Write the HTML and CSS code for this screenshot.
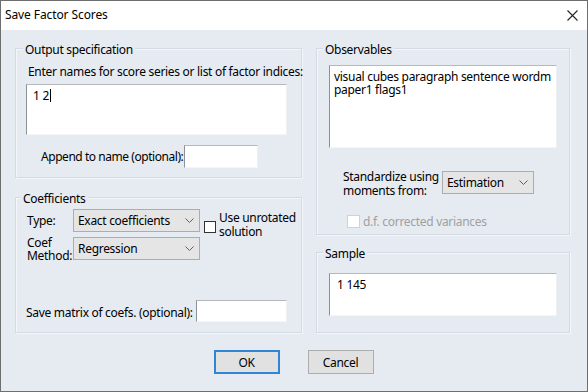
FILE: index.html
```html
<!DOCTYPE html>
<html>
<head>
<meta charset="utf-8">
<title>Save Factor Scores</title>
<link rel="stylesheet" href="styles.css">
</head>
<body>
<div class="window">
  <div class="titlebar">
    <span class="title">Save Factor Scores</span>
    <svg class="close" width="11" height="11" viewBox="0 0 11 11"><path d="M0.5 0.5 L10.5 10.5 M10.5 0.5 L0.5 10.5" stroke="#222" stroke-width="1.1" fill="none"/></svg>
  </div>
  <div class="body">
    <div class="col">
      <section class="group g-output">
        <div class="gtitle">Output specification</div>
        <div class="prompt">Enter names for score series or list of factor indices:</div>
        <div class="edit ta-names">1 2<span class="caret"></span></div>
        <div class="append-row">
          <span class="append-lbl">Append to name (optional):</span>
          <div class="edit field-append"></div>
        </div>
      </section>
      <section class="group g-coef">
        <div class="gtitle">Coefficients</div>
        <div class="coef-grid">
          <span class="lbl">Type:</span>
          <div class="combo combo-coef"><span>Exact coefficients</span><svg width="9" height="5" viewBox="0 0 9 5"><path d="M0.5 0.5 L4.5 4.5 L8.5 0.5" stroke="#606060" fill="none"/></svg></div>
          <div class="chk chk-unrot"><span class="box"></span><span class="chk-text">Use unrotated<br>solution</span></div>
          <span class="lbl lbl-two">Coef<br>Method:</span>
          <div class="combo combo-coef"><span>Regression</span><svg width="9" height="5" viewBox="0 0 9 5"><path d="M0.5 0.5 L4.5 4.5 L8.5 0.5" stroke="#606060" fill="none"/></svg></div>
        </div>
        <div class="save-row">
          <span>Save matrix of coefs. (optional):</span>
          <div class="edit field-save"></div>
        </div>
      </section>
    </div>
    <div class="col">
      <section class="group g-obs">
        <div class="gtitle">Observables</div>
        <div class="edit ta-obs">visual cubes paragraph sentence wordm<br>paper1 flags1</div>
        <div class="std-row">
          <span class="std-lbl">Standardize using<br>moments from:</span>
          <div class="combo combo-std"><span>Estimation</span><svg width="9" height="5" viewBox="0 0 9 5"><path d="M0.5 0.5 L4.5 4.5 L8.5 0.5" stroke="#606060" fill="none"/></svg></div>
        </div>
        <div class="chk chk-df"><span class="box"></span><span class="chk-text">d.f. corrected variances</span></div>
      </section>
      <section class="group g-sample">
        <div class="gtitle">Sample</div>
        <div class="edit ta-sample">1 145</div>
      </section>
    </div>
  </div>
  <div class="buttons">
    <div class="btn btn-default">OK</div>
    <div class="btn">Cancel</div>
  </div>
</div>
</body>
</html>
```
FILE: styles.css
```css
* { box-sizing: border-box; }
html, body { margin: 0; padding: 0; }
body {
  font-family: "Noto Sans", "Liberation Sans", sans-serif;
  font-size: 12px;
  letter-spacing: -0.3px;
  color: #000;
  background: #fff;
  white-space: nowrap;
}
.window {
  width: 588px;
  height: 392px;
  border: 1px solid #6e6e6e;
  background: #e6ebf2;
  display: flex;
  flex-direction: column;
  overflow: hidden;
}
.titlebar {
  height: 29px;
  flex: none;
  background: #fff;
  display: flex;
  align-items: center;
  justify-content: space-between;
  padding: 0 9px 1px 4px;
}
.title { font-size: 12px; line-height: 16px; letter-spacing: -0.1px; }
.close { display: block; }
.body {
  display: grid;
  grid-template-columns: 287px 254px;
  column-gap: 14px;
  padding: 18px 0 0 14px;
}
.col { display: flex; flex-direction: column; }
.group {
  border: 1px solid #d3dae3;
  box-shadow: inset 1px 1px 0 #f4f6f9, 1px 1px 0 #f4f6f9;
  padding: 0 0 0 10px;
}
.gtitle {
  line-height: 16px;
  margin-top: -7px;
  margin-left: -3px;
  padding: 0 2px;
  background: #e6ebf2;
  align-self: flex-start;
  width: max-content;
}
.edit {
  background: #fff;
  border: 1px solid;
  border-color: #b4b8bd #eef0f2 #f4f5f7 #8d9196;
}
.g-output { height: 130px; display: flex; flex-direction: column; }
.prompt { line-height: 16px; margin-top: 6px; padding-left: 2px; }
.ta-names {
  margin-top: 4px;
  width: 261px;
  height: 51px;
  padding: 4px 6px;
  line-height: 13px;
}
.caret {
  display: inline-block;
  width: 1px;
  height: 13px;
  background: #000;
  vertical-align: -2px;
  margin-left: 1px;
}
.append-row {
  margin-top: 10px;
  padding-left: 15px;
  display: flex;
  align-items: center;
}
.append-lbl { width: 143px; letter-spacing: -0.45px; }
.field-append { width: 74px; height: 23px; }
.g-coef {
  margin-top: 19px;
  height: 136px;
  padding-left: 8px;
  display: flex;
  flex-direction: column;
}
.g-coef .gtitle { margin-left: -3px; }
.coef-grid {
  margin-top: 2px;
  display: grid;
  grid-template-columns: 46px 127px auto;
  grid-template-rows: 23px 23px;
  row-gap: 5px;
  align-items: center;
  padding-left: 3px;
}
.lbl-two { line-height: 13px; }
.combo {
  height: 23px;
  background: #e5e5e5;
  border: 1px solid #adadad;
  display: flex;
  align-items: center;
  justify-content: space-between;
  padding: 0 5px 0 4px;
}
.combo svg { display: block; }
.chk {
  display: flex;
  align-items: center;
}
.box {
  width: 12px;
  height: 12px;
  background: #fff;
  border: 1px solid #333;
  flex: none;
}
.chk-unrot {
  grid-column: 3;
  grid-row: 1 / span 2;
  align-self: start;
  margin-top: 2px;
  margin-left: 4px;
  line-height: 14px;
}
.chk-unrot .box { margin-right: 3px; margin-top: 3px; }
.save-row {
  margin-top: 40px;
  padding-left: 2px;
  display: flex;
  align-items: center;
  justify-content: space-between;
  padding-right: 14px;
}
.save-row span { padding-top: 3px; }
.field-save { width: 91px; height: 22px; }

.g-obs {
  height: 187px;
  padding-left: 12px;
  display: flex;
  flex-direction: column;
}
.g-obs .gtitle, .g-sample .gtitle { margin-left: -6px; }
.ta-obs {
  margin-top: 7px;
  width: 228px;
  height: 83px;
  padding: 4px 4px;
  line-height: 13px;
}
.std-row {
  margin-top: 19px;
  padding-left: 14px;
  display: flex;
  align-items: center;
}
.std-lbl { width: 99px; line-height: 14px; padding-top: 3px; }
.combo-std { width: 92px; height: 23px; }
.chk-df {
  margin-top: 15px;
  padding-left: 18px;
  color: #a0a0a0;
}
.chk-df .box { border-color: #cfd3d8; margin-right: 3px; width: 13px; height: 13px; }
.g-sample {
  margin-top: 17px;
  height: 81px;
  padding-left: 12px;
  display: flex;
  flex-direction: column;
}
.ta-sample {
  margin-top: 11px;
  width: 228px;
  height: 43px;
  padding: 4px 7px;
  line-height: 13px;
}
.buttons {
  margin-top: 17px;
  display: flex;
  justify-content: center;
  gap: 28px;
  padding-right: 1px;
}
.btn {
  width: 66px;
  height: 24px;
  background: #e1e1e1;
  border: 1px solid #adadad;
  display: flex;
  align-items: center;
  justify-content: center;
}
.btn-default { border: 2px solid #2f86d6; }
```
